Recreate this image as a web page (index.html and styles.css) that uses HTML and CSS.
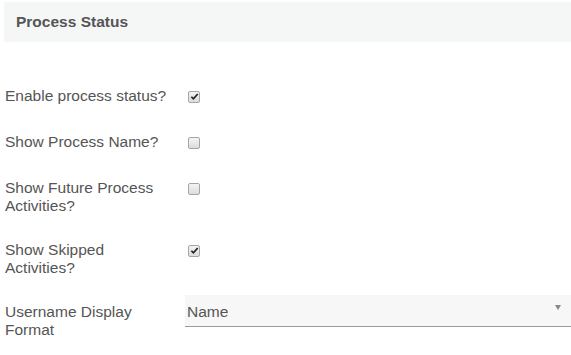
FILE: index.html
```html
<!DOCTYPE html>
<html>
<head>
<meta charset="utf-8">
<link rel="stylesheet" href="styles.css">
</head>
<body>
<div class="panel">
  <div class="panel-header">Process Status</div>
  <div class="form">
    <div class="row">
      <div class="label">Enable process status?</div>
      <div class="field"><span class="cb checked"><svg viewBox="0 0 10 10" width="9" height="9"><path d="M1.5 5.3 L3.8 7.6 L8.6 2.2" fill="none" stroke="#222" stroke-width="1.9"/></svg></span></div>
    </div>
    <div class="row">
      <div class="label">Show Process Name?</div>
      <div class="field"><span class="cb"></span></div>
    </div>
    <div class="row">
      <div class="label">Show Future Process Activities?</div>
      <div class="field"><span class="cb"></span></div>
    </div>
    <div class="row">
      <div class="label">Show Skipped Activities?</div>
      <div class="field"><span class="cb checked"><svg viewBox="0 0 10 10" width="9" height="9"><path d="M1.5 5.3 L3.8 7.6 L8.6 2.2" fill="none" stroke="#222" stroke-width="1.9"/></svg></span></div>
    </div>
    <div class="row row-select">
      <div class="label">Username Display Format</div>
      <div class="field field-select">
        <div class="select"><span class="select-value">Name</span><span class="arrow"></span></div>
      </div>
    </div>
  </div>
</div>
</body>
</html>
```

FILE: styles.css
```css
html, body {
  margin: 0;
  padding: 0;
  background: #fff;
}
body {
  font-family: "Liberation Sans", Arial, sans-serif;
  font-size: 15.5px;
  color: #555;
}
.panel {
  padding: 2px 0 0 4px;
}
.panel-header {
  height: 40px;
  line-height: 40px;
  background: #f5f7f7;
  padding-left: 12px;
  font-weight: bold;
  color: #555;
}
.form {
  padding-left: 1px;
  padding-top: 44.5px;
}
.row {
  display: flex;
  align-items: flex-start;
  min-height: 21px;
  margin-bottom: 25px;
}
.label {
  width: 180px;
  flex: none;
  line-height: 18.5px;
  padding-right: 10px;
  box-sizing: border-box;
}
.field {
  flex: 1;
}
.cb {
  display: flex;
  align-items: center;
  justify-content: center;
  width: 12px;
  height: 12px;
  margin: 4px 0 0 3px;
  border: 1px solid #a6a6a6;
  border-radius: 2px;
  background: linear-gradient(#f4f4f4, #dcdcdc);
  box-sizing: border-box;
}
.row-select {
  margin-top: -7.5px;
}
.row-select .label {
  padding-top: 7.5px;
}
.select {
  display: flex;
  align-items: center;
  justify-content: space-between;
  height: 32px;
  background: #f7f7f7;
  border-bottom: 1px solid #9a9a9a;
  box-sizing: border-box;
  padding: 3px 10px 0 2px;
}
.select-value {
  color: #555;
}
.arrow {
  width: 0;
  height: 0;
  border-left: 3.5px solid transparent;
  border-right: 3.5px solid transparent;
  border-top: 5px solid #888;
  margin-top: -10px;
}
```
